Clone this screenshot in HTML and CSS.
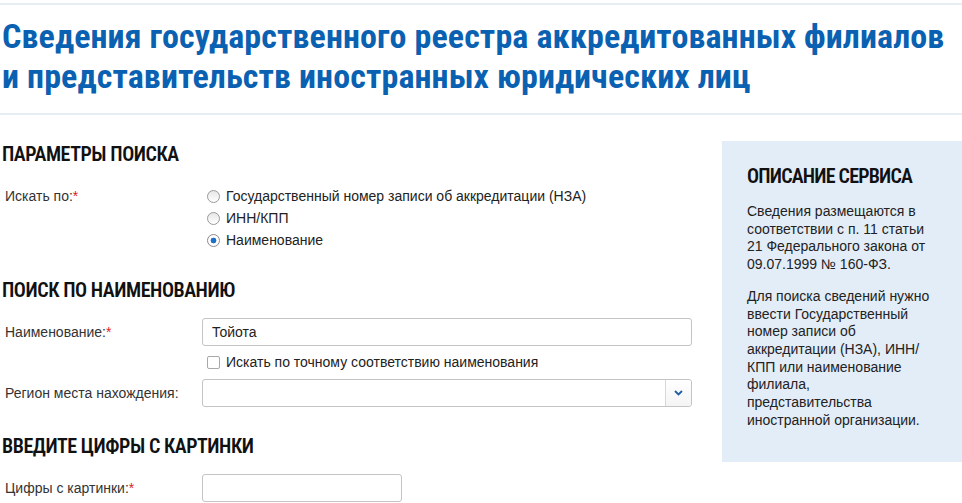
FILE: index.html
```html
<!DOCTYPE html>
<html lang="ru">
<head>
<meta charset="utf-8">
<title>Сведения государственного реестра</title>
<link rel="stylesheet" href="styles.css">
</head>
<body>
<div class="page">
  <header class="page-head">
    <h1 class="title">Сведения государственного реестра аккредитованных филиалов и представительств иностранных юридических лиц</h1>
  </header>
  <div class="layout">
    <main class="main">
      <h2 class="sec-title first">Параметры поиска</h2>
      <div class="row">
        <div class="label">Искать по:<span class="req">*</span></div>
        <div class="radios">
          <label class="opt"><input type="radio" name="by" class="radio"><span>Государственный номер записи об аккредитации (НЗА)</span></label>
          <label class="opt"><input type="radio" name="by" class="radio"><span>ИНН/КПП</span></label>
          <label class="opt"><input type="radio" name="by" class="radio" checked><span>Наименование</span></label>
        </div>
      </div>

      <h2 class="sec-title">Поиск по наименованию</h2>
      <div class="row field-row">
        <div class="label">Наименование:<span class="req">*</span></div>
        <input class="input wide" type="text" value="Тойота">
      </div>
      <div class="row check-row">
        <div class="label"></div>
        <label class="opt"><input type="checkbox" class="check"><span>Искать по точному соответствию наименования</span></label>
      </div>
      <div class="row field-row">
        <div class="label">Регион места нахождения:</div>
        <div class="select wide">
          <span class="select-value"></span>
          <span class="select-btn">
            <svg width="9" height="6" viewBox="0 0 9 6"><path d="M1 1l3.5 3.5L8 1" fill="none" stroke="#1d5ea6" stroke-width="1.8"/></svg>
          </span>
        </div>
      </div>

      <h2 class="sec-title">Введите цифры с картинки</h2>
      <div class="row field-row">
        <div class="label">Цифры с картинки:<span class="req">*</span></div>
        <input class="input short" type="text" value="">
      </div>
    </main>

    <aside class="side">
      <h2 class="side-title">Описание сервиса</h2>
      <p class="side-text">Сведения размещаются в соответствии с п. 11 статьи 21 Федерального закона от 09.07.1999 № 160-ФЗ.</p>
      <p class="side-text">Для поиска сведений нужно ввести Государственный номер записи об аккредитации (НЗА), ИНН/<wbr>КПП или наименование филиала, представительства иностранной организации.</p>
    </aside>
  </div>
</div>
</body>
</html>
```
FILE: styles.css
```css
* { box-sizing: border-box; }
html, body { margin: 0; padding: 0; background: #fff; }
body {
  font-family: "Liberation Sans", Arial, sans-serif;
  font-size: 14px;
  color: #333;
}
.page {
  width: 962px;
  padding-top: 3px;
}
.page-head {
  border-top: 2px solid #e6edf5;
  border-bottom: 2px solid #e6edf5;
  padding: 11px 0 17px 2px;
}
.title {
  margin: 0;
  font-family: Roboto, "Open Sans", sans-serif;
  font-stretch: 75%;
  font-weight: 700;
  font-size: 34px;
  line-height: 40px;
  letter-spacing: 0.1px;
  color: #0b61b1;
}
.layout {
  display: flex;
  align-items: flex-start;
}
.main {
  width: 692px;
  padding-left: 2px;
}
.sec-title, .side-title {
  margin: 27px 0 16px;
  font-family: Roboto, "Open Sans", sans-serif;
  font-stretch: 75%;
  font-weight: 600;
  font-size: 20px;
  line-height: 24px;
  letter-spacing: -0.45px;
  text-transform: uppercase;
  color: #111;
}
.sec-title.first { margin-bottom: 19px; }
.row {
  display: grid;
  grid-template-columns: 200px 490px;
}
.label {
  padding-left: 3px;
  line-height: 22px;
  color: #333;
}
.field-row .label { line-height: 28px; }
.req { color: #e21b1b; }
.radios { display: flex; flex-direction: column; }
.opt {
  display: flex;
  align-items: center;
  height: 22px;
  line-height: 22px;
  color: #222;
}
.radio, .check {
  appearance: none;
  -webkit-appearance: none;
  width: 13px;
  height: 13px;
  margin: 0 6px 0 5px;
  border: 1px solid #9a9a9a;
  background: linear-gradient(#e6e6e6, #fff);
  flex: none;
}
.radio { border-radius: 50%; }
.radio:checked {
  background: radial-gradient(circle, #1e6fc7 0 2.6px, #fff 3.2px 100%);
  border-color: #8a8a8a;
}
.check { border-radius: 2px; border-color: #a8a8a8; background: #fff; }
.field-row { align-items: center; }
.field-row + .check-row { margin-top: 5px; }
.check-row { margin-bottom: 6px; }
.input, .select {
  height: 28px;
  border: 1px solid #c4c4c4;
  border-radius: 3px;
  background: #fff;
  font-family: "Liberation Sans", Arial, sans-serif;
  font-size: 14px;
  color: #222;
  padding: 0 9px;
  margin: 0;
  outline: none;
}
.wide { width: 490px; }
.short { width: 200px; }
.select {
  display: flex;
  padding: 0;
}
.select-value { flex: 1; }
.select-btn {
  width: 26px;
  border-left: 1px solid #d8d8d8;
  display: flex;
  align-items: center;
  justify-content: center;
  background: linear-gradient(#fff, #f4f4f4);
  border-radius: 0 3px 3px 0;
}
.side {
  width: 240px;
  margin-left: 30px;
  margin-top: 26px;
  background: #e3edf8;
  padding: 23px 30px 33px 25px;
}
.side-title { margin: 0 0 15px; letter-spacing: -0.8px; }
.side-text {
  margin: 0 0 14px;
  line-height: 17.7px;
  color: #222;
}
.side-text:last-child { margin-bottom: 0; }
```
